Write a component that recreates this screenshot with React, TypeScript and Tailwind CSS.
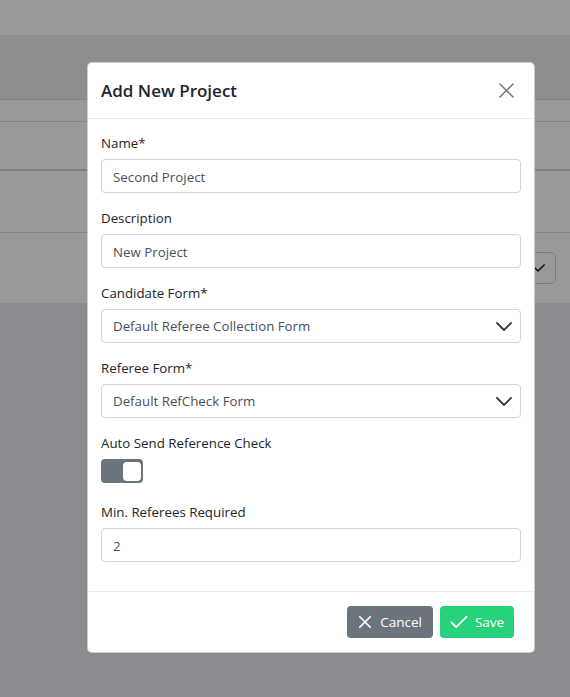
import React, { useState } from 'react';

const font = "font-['Segoe_UI','Open_Sans',sans-serif]";

const Chevron = ({ className = '' }: { className?: string }) => (
  <svg viewBox="0 0 16 9" className={className} fill="none" stroke="currentColor" strokeWidth="1.8" strokeLinecap="round" strokeLinejoin="round">
    <path d="M1 1l7 7 7-7" />
  </svg>
);

const Field = ({ label, children, last = false }: { label: string; children: React.ReactNode; last?: boolean }) => (
  <div className={last ? '' : 'mb-[15px]'}>
    <label className="block h-[21px] leading-[21px] text-[13.3px] text-[#212529] mb-[5px]">{label}</label>
    {children}
  </div>
);

const inputCls =
  'w-full h-[34px] border border-[#ced4da] rounded-[4px] px-[11px] pt-[2px] text-[13.3px] text-[#495057] bg-white outline-none';

const App: React.FC = () => {
  const [name, setName] = useState('Second Project');
  const [desc, setDesc] = useState('New Project');
  const [minRefs, setMinRefs] = useState('2');
  const [autoSend, setAutoSend] = useState(true);

  return (
    <div className={`relative w-[570px] h-[697px] overflow-hidden bg-[#e8eaf0] ${font}`}>
      {/* page behind the modal */}
      <div className="bg-white">
        <div className="h-[36px] border-b border-[#e5e7eb]" />
        <div className="h-[64px] bg-[#ededed] border-b border-[#dcdcdc]" />
        <div className="h-[22px] border-b border-[#dcdcdc]" />
        <div className="h-[49px] border-b-2 border-[#d0d3d8]" />
        <div className="h-[62px] border-b border-[#dcdcdc]" />
        <div className="h-[70px] flex items-center justify-end pr-[14px]">
          <div className="w-[37px] h-[32px] border border-[#ced4da] rounded-[5px] flex items-center justify-center text-[#212529]">
            <Chevron className="w-[14px] h-[8px]" />
          </div>
        </div>
      </div>

      {/* backdrop */}
      <div className="absolute inset-0 bg-black/40" />

      {/* modal */}
      <div className="absolute left-[87px] top-[62px] w-[448px] bg-white rounded-[5px] border border-black/20">
        <div className="h-[56px] flex items-center justify-between pl-[13px] pr-[20px] border-b border-[#e9ecef]">
          <h5 className="text-[17px] font-semibold text-[#212529] mt-[1px]">Add New Project</h5>
          <button className="text-[#6c757d]">
            <svg viewBox="0 0 16 16" className="w-[15px] h-[15px]" fill="none" stroke="currentColor" strokeWidth="1.5" strokeLinecap="round">
              <path d="M1 1l14 14M15 1L1 15" />
            </svg>
          </button>
        </div>

        <div className="px-[13px] pt-[14px] pb-[29px]">
          <Field label="Name*">
            <input className={inputCls} value={name} onChange={(e) => setName(e.target.value)} />
          </Field>
          <Field label="Description">
            <input className={inputCls} value={desc} onChange={(e) => setDesc(e.target.value)} />
          </Field>
          <Field label="Candidate Form*">
            <div className={`${inputCls} flex items-center justify-between pr-[8px]`}>
              <span>Default Referee Collection Form</span>
              <Chevron className="w-[16px] h-[9px] text-[#343a40] -mt-[2px]" />
            </div>
          </Field>
          <Field label="Referee Form*">
            <div className={`${inputCls} flex items-center justify-between pr-[8px]`}>
              <span>Default RefCheck Form</span>
              <Chevron className="w-[16px] h-[9px] text-[#343a40] -mt-[2px]" />
            </div>
          </Field>
          <Field label="Auto Send Reference Check">
            <div className="h-[28px]">
              <button
                onClick={() => setAutoSend(!autoSend)}
                className={`w-[42px] h-[24px] rounded-[4px] bg-[#6c757d] flex items-center p-[2px] ${autoSend ? 'justify-end' : 'justify-start'}`}
              >
                <span className="w-[18px] h-[19px] rounded-[4px] bg-white" />
              </button>
            </div>
          </Field>
          <Field label="Min. Referees Required" last>
            <input className={inputCls} value={minRefs} onChange={(e) => setMinRefs(e.target.value)} />
          </Field>
        </div>

        <div className="border-t border-[#e9ecef] flex justify-end gap-[7px] pr-[20px] pt-[14px] pb-[14px]">
          <button className="h-[32px] w-[86px] rounded-[4px] bg-[#6c757d] text-white text-[13.5px] flex items-center justify-center gap-[8px]">
            <svg viewBox="0 0 16 16" className="w-[14px] h-[14px]" fill="none" stroke="currentColor" strokeWidth="2" strokeLinecap="round">
              <path d="M2 2l12 12M14 2L2 14" />
            </svg>
            Cancel
          </button>
          <button className="h-[32px] w-[74px] rounded-[4px] bg-[#28d17c] text-white text-[13.5px] flex items-center justify-center gap-[7px]">
            <svg viewBox="0 0 18 14" className="w-[18px] h-[13px]" fill="none" stroke="currentColor" strokeWidth="2" strokeLinecap="round" strokeLinejoin="round">
              <path d="M1 7l5 5L17 1" />
            </svg>
            Save
          </button>
        </div>
      </div>
    </div>
  );
};

export default App;
